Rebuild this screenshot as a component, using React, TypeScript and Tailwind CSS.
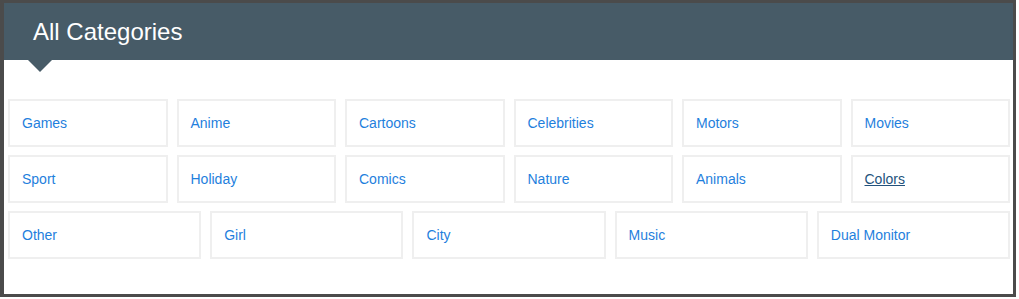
import React from "react";

const rows: string[][] = [
  ["Games", "Anime", "Cartoons", "Celebrities", "Motors", "Movies"],
  ["Sport", "Holiday", "Comics", "Nature", "Animals", "Colors"],
  ["Other", "Girl", "City", "Music", "Dual Monitor"],
];

export default function App() {
  return (
    <div className="w-[1019px] h-[299px] bg-white" style={{ fontFamily: '"Liberation Sans", Arial, sans-serif' }}>
      <div className="w-[1016px] h-[297px] border-t-[3px] border-r-[3px] border-b-[3px] border-l-4 border-[#4b4b4b] bg-white">
        <div className="h-full flex flex-col">
          <div className="relative h-[57px] bg-[#475b67] flex items-center pl-[29px] shrink-0">
            <h1 className="text-white text-[24px] leading-none">All Categories</h1>
            <div className="absolute left-[24px] top-[57px] w-0 h-0 border-l-[12px] border-r-[12px] border-t-[12px] border-l-transparent border-r-transparent border-t-[#475b67]" />
          </div>
          <div className="pt-[39px] pl-[4px] pr-[3px] flex flex-col gap-[8px]">
            {rows.map((row, i) => (
              <div key={i} className="flex gap-[9px]">
                {row.map((name) => (
                  <a
                    key={name}
                    href="#"
                    className={
                      "flex-1 h-[48px] border-2 border-[#efefef] flex items-center pl-[12px] text-[14px] " +
                      (name === "Colors" ? "text-[#23527c] underline" : "text-[#1f7fdd]")
                    }
                  >
                    {name}
                  </a>
                ))}
              </div>
            ))}
          </div>
        </div>
      </div>
    </div>
  );
}
